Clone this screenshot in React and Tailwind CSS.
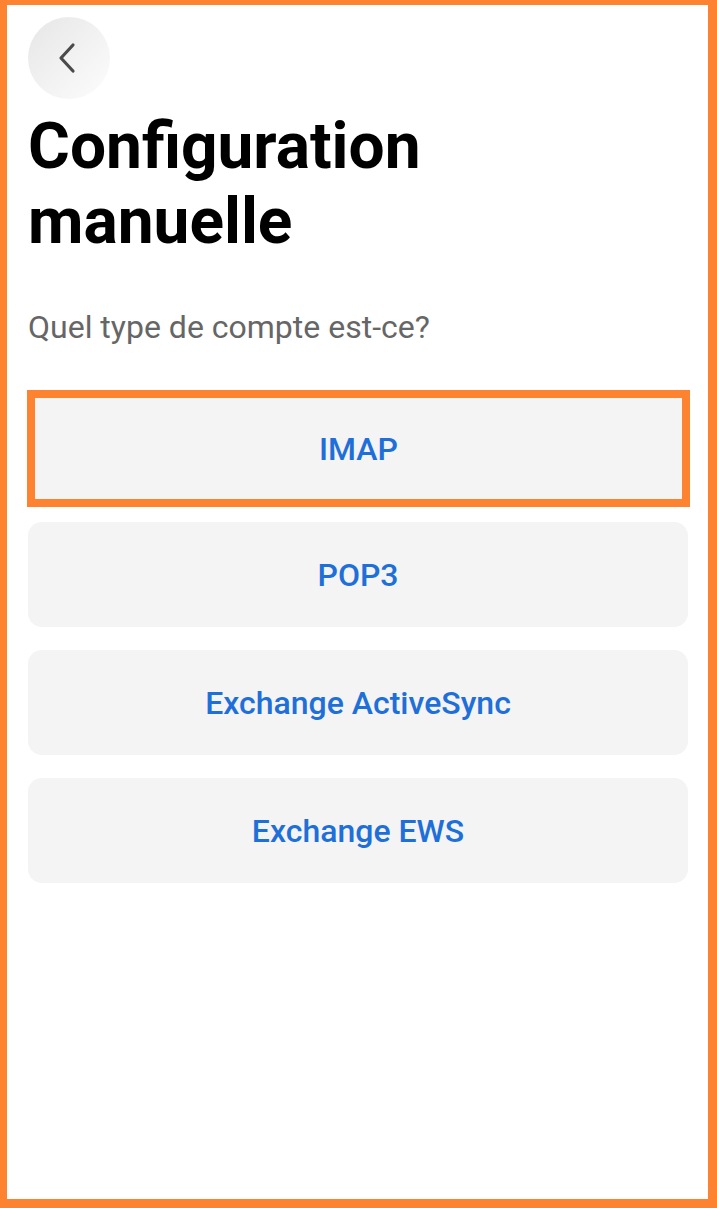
import React from 'react';

const ACCOUNT_TYPES = ['IMAP', 'POP3', 'Exchange ActiveSync', 'Exchange EWS'];

function BackButton() {
  return (
    <button className="w-[82px] h-[82px] rounded-full bg-gradient-to-br from-[#e6e6e6] to-[#fdfdfd] flex items-center justify-center">
      <svg width="30" height="34" viewBox="0 0 30 34" fill="none">
        <path d="M19 4 L7 17 L19 30" stroke="#4a4a4a" strokeWidth="3.2" strokeLinecap="round" strokeLinejoin="round" />
      </svg>
    </button>
  );
}

export default function App() {
  return (
    <div
      className="w-[717px] h-[1208px] bg-white border-[#fd8330] border-t-[5px] border-l-[7px] border-r-[9px] border-b-[9px] overflow-hidden"
      style={{ fontFamily: 'Roboto, "Noto Sans", sans-serif' }}
    >
      <div className="pl-[21px] pr-[20px] pt-[12px] flex flex-col">
        {/* Header */}
        <BackButton />
        <h1 className="mt-[10px] text-[64px] leading-[75px] font-bold text-black">
          Configuration
          <br />
          manuelle
        </h1>
        <p className="mt-[49px] text-[32px] leading-[38px] text-[#666666]">
          Quel type de compte est-ce?
        </p>

        {/* Account types */}
        <div className="mt-[44px] flex flex-col">
          {ACCOUNT_TYPES.map((type, i) =>
            i === 0 ? (
              <button
                key={type}
                className="-ml-px w-[663px] h-[117px] border-[8px] border-[#fd8330] bg-[#f4f4f4] text-[32px] font-medium text-[#1f6fd8] flex items-center justify-center"
              >
                {type}
              </button>
            ) : (
              <button
                key={type}
                className="mt-[15px] mb-[8px] first-of-type:mt-[15px] w-[660px] h-[105px] rounded-[14px] bg-[#f4f4f4] text-[32px] font-medium text-[#1f6fd8] flex items-center justify-center"
              >
                {type}
              </button>
            )
          )}
        </div>
      </div>
    </div>
  );
}
